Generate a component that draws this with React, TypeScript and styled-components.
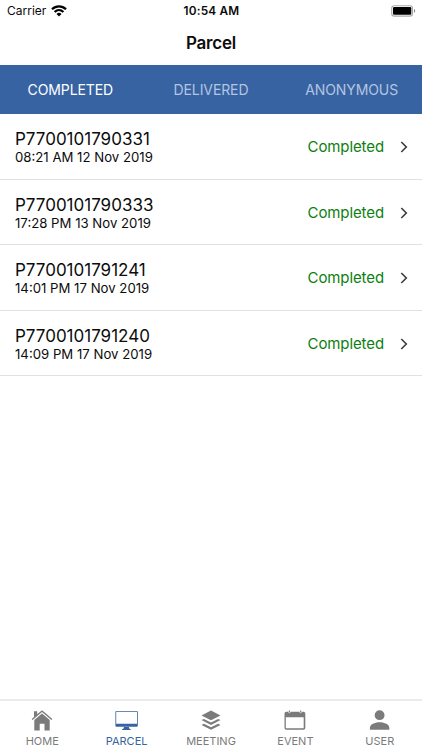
import React from "react";
import styled, { createGlobalStyle } from "styled-components";

const GlobalStyle = createGlobalStyle`
  *, *::before, *::after { box-sizing: border-box; }
  body {
    margin: 0;
    background: #fff;
    font-family: Inter, "Liberation Sans", sans-serif;
    color: #0c0c0c;
    overflow: hidden;
  }
`;

const Screen = styled.div`
  width: 422px;
  height: 750px;
  display: flex;
  flex-direction: column;
  background: #fff;
`;

const StatusBar = styled.header`
  height: 22px;
  display: grid;
  grid-template-columns: 1fr auto 1fr;
  align-items: center;
  padding: 0 6px 0 7px;
`;

const Carrier = styled.div`
  display: flex;
  align-items: center;
  gap: 5px;
  font-size: 12px;
  line-height: 22px;

  svg {
    margin-bottom: 1px;
  }
`;

const Clock = styled.div`
  font-size: 11.8px;
  font-weight: 600;
  line-height: 22px;
  letter-spacing: 0.2px;
`;

const BatterySlot = styled.div`
  display: flex;
  justify-content: flex-end;
  padding-bottom: 1px;
`;

const Title = styled.h1`
  margin: 0;
  height: 43px;
  line-height: 42px;
  text-align: center;
  font-size: 17px;
  font-weight: 600;
  letter-spacing: -0.2px;
`;

const TabBar = styled.nav`
  height: 49px;
  display: grid;
  grid-template-columns: repeat(3, 1fr);
  background: #3763a3;
`;

const Tab = styled.button<{ $active?: boolean }>`
  border: 0;
  padding: 0;
  background: none;
  font: inherit;
  font-size: 14px;
  line-height: 49px;
  letter-spacing: -0.1px;
  white-space: nowrap;
  color: ${(p) => (p.$active ? "#fff" : "#b3c5e0")};
`;

const List = styled.main`
  flex: 1;
`;

const Row = styled.article`
  height: 65.5px;
  display: flex;
  align-items: center;
  padding: 2px 13px 0 15px;
  border-bottom: 1px solid #e0e0e1;
`;

const Details = styled.div`
  flex: 1;
  padding-top: 2px;
`;

const Code = styled.div`
  font-size: 17px;
  line-height: 19px;
`;

const Time = styled.div`
  font-size: 13.2px;
  line-height: 17px;
`;

const Status = styled.span`
  margin-right: 15px;
  font-size: 15px;
  line-height: 20px;
  letter-spacing: -0.1px;
  color: #0b800f;
`;

const BottomBar = styled.nav`
  height: 51px;
  display: grid;
  grid-template-columns: repeat(5, 1fr);
  border-top: 2px solid #ebebeb;
`;

const BottomItem = styled.button<{ $active?: boolean }>`
  border: 0;
  padding: 8px 0 0;
  background: none;
  font: inherit;
  display: flex;
  flex-direction: column;
  align-items: center;
  color: ${(p) => (p.$active ? "#3763a3" : "#7b7b7b")};
`;

const BottomLabel = styled.span`
  font-size: 11px;
  line-height: 15px;
  margin-top: 1px;
`;

const WifiIcon = () => (
  <svg width="16" height="12" viewBox="0 0 16 12" fill="none" stroke="#000" strokeWidth="2.3">
    <path d="M1 4.3C5 .4 11 .4 15 4.3" />
    <path d="M3.6 7C6.2 4.5 9.8 4.5 12.4 7" />
    <path d="M8 11.4 5.5 8.9Q8 6.7 10.5 8.9Z" fill="#000" stroke="none" />
  </svg>
);

const BatteryIcon = () => (
  <svg width="25" height="12" viewBox="0 0 25 12">
    <rect x=".7" y=".7" width="20.8" height="10.4" rx="2.7" fill="#fff" stroke="#aaa" strokeWidth="1.1" />
    <rect x="2" y="2" width="18.3" height="7.8" rx="1.3" fill="#000" />
    <path d="M23 4v3.8q1.2-.5 1.2-1.9T23 4Z" fill="#888" />
  </svg>
);

const Chevron = () => (
  <svg width="10" height="14" viewBox="0 0 10 14" fill="none" stroke="#3c3c3c" strokeWidth="1.6">
    <path d="m2.3 2 5 5-5 5" />
  </svg>
);

const HomeIcon = () => (
  <svg width="24" height="24" viewBox="0 0 24 24" fill="currentColor">
    <path d="M4.3 10.9 12 4.5l7.7 6.4V21.6h-5.2v-6.8H9.7v6.8H4.3Z" />
    <path d="M12 1.2 16 4.6 22.3 10l-.9 1L12 3.1 2.6 11l-.9-1L4 8V2.3h3.2v3Z" />
  </svg>
);

const MonitorIcon = () => (
  <svg width="24" height="24" viewBox="0 0 24 24" fill="currentColor">
    <path fillRule="evenodd" d="M1.4 1.9h20.4q1 0 1 1v13.8q0 1-1 1H1.4q-1 0-1-1V2.9q0-1 1-1ZM1.2 2.7v12h20.8v-12Z" />
    <path d="M8.9 18h5l.5 1.8 1.4.5v.6H7v-.6l1.4-.5Z" />
  </svg>
);

const LayersIcon = () => (
  <svg width="24" height="24" viewBox="0 0 24 24" fill="currentColor">
    <path d="m12 1.6 9.5 4.8-9.5 4.8-9.5-4.8Z" />
    <path d="m2.5 11.1 2.4-1.2 7.1 3.6 7.1-3.6 2.4 1.2-9.5 4.8Z" />
    <path d="m2.5 15.9 2.4-1.2 7.1 3.6 7.1-3.6 2.4 1.2-9.5 4.8Z" />
  </svg>
);

const CalendarIcon = () => (
  <svg width="24" height="24" viewBox="0 0 24 24" fill="currentColor">
    <path
      fillRule="evenodd"
      d="M3.3 2.8h1.9q.2 1.4 1.2 1.4t1.2-1.4h8.8q.2 1.4 1.2 1.4t1.2-1.4h1.7q1.8 0 1.8 1.8v14.3q0 1.8-1.8 1.8H3.3q-1.8 0-1.8-1.8V4.6q0-1.8 1.8-1.8ZM2.8 8.2v10.2q0 .9.9.9h16.1q.9 0 .9-.9V8.2Z"
    />
    <path d="M5.8 1.4h1.1v2H5.8ZM17.1 1.4h1.1v2h-1.1Z" />
  </svg>
);

const UserIcon = () => (
  <svg width="24" height="24" viewBox="0 0 24 24" fill="currentColor">
    <circle cx="11.6" cy="6.2" r="4.9" />
    <path d="M1.9 20.8V19c0-3.5 4.6-5.7 9.7-5.7s9.7 2.2 9.7 5.7v1.8Z" />
  </svg>
);

const tabs = ["COMPLETED", "DELIVERED", "ANONYMOUS"];

const parcels = [
  { code: "P7700101790331", time: "08:21 AM 12 Nov 2019" },
  { code: "P7700101790333", time: "17:28 PM 13 Nov 2019" },
  { code: "P7700101791241", time: "14:01 PM 17 Nov 2019" },
  { code: "P7700101791240", time: "14:09 PM 17 Nov 2019" },
];

const sections = [
  { label: "HOME", Icon: HomeIcon },
  { label: "PARCEL", Icon: MonitorIcon },
  { label: "MEETING", Icon: LayersIcon },
  { label: "EVENT", Icon: CalendarIcon },
  { label: "USER", Icon: UserIcon },
];

export default function App() {
  return (
    <>
      <GlobalStyle />
      <Screen>
        <StatusBar>
          <Carrier>
            Carrier
            <WifiIcon />
          </Carrier>
          <Clock>10:54 AM</Clock>
          <BatterySlot>
            <BatteryIcon />
          </BatterySlot>
        </StatusBar>
        <Title>Parcel</Title>
        <TabBar>
          {tabs.map((tab) => (
            <Tab key={tab} $active={tab === "COMPLETED"}>
              {tab}
            </Tab>
          ))}
        </TabBar>
        <List>
          {parcels.map(({ code, time }) => (
            <Row key={code}>
              <Details>
                <Code>{code}</Code>
                <Time>{time}</Time>
              </Details>
              <Status>Completed</Status>
              <Chevron />
            </Row>
          ))}
        </List>
        <BottomBar>
          {sections.map(({ label, Icon }) => (
            <BottomItem key={label} $active={label === "PARCEL"}>
              <Icon />
              <BottomLabel>{label}</BottomLabel>
            </BottomItem>
          ))}
        </BottomBar>
      </Screen>
    </>
  );
}
